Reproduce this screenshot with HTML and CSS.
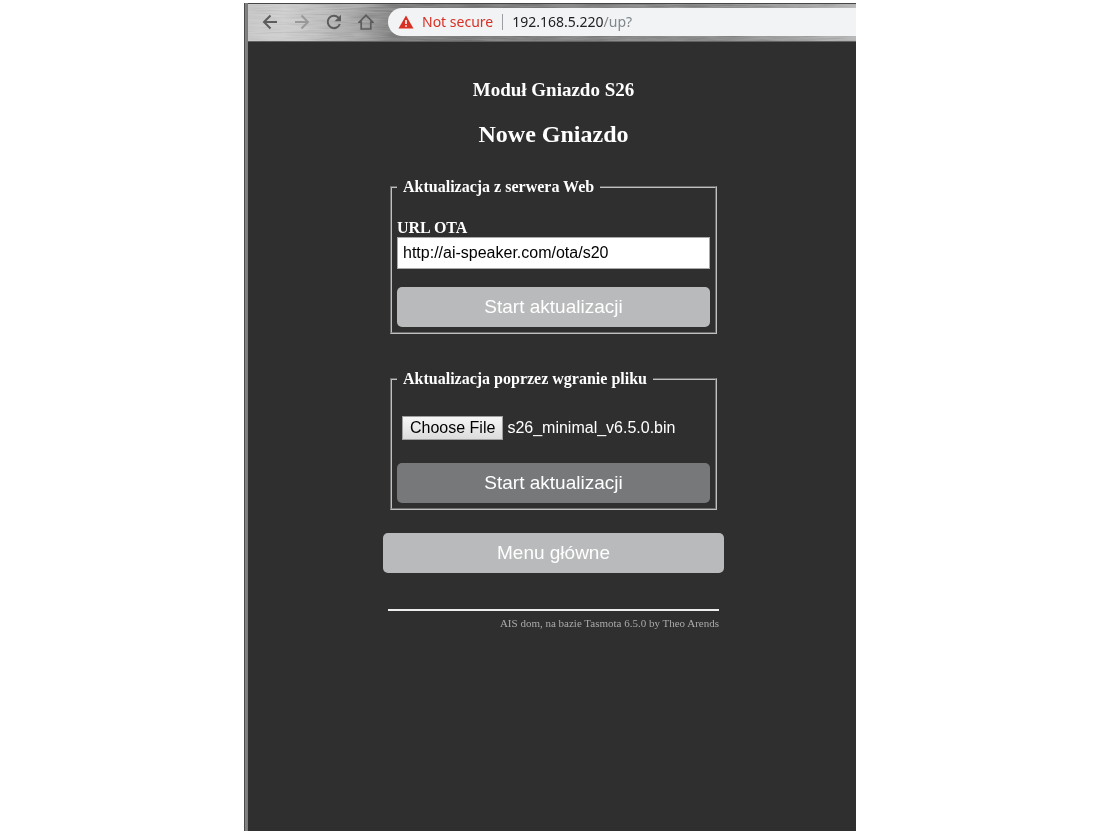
FILE: index.html
```html
<!DOCTYPE html>
<html lang="pl">
<head>
<meta charset="utf-8">
<meta name="viewport" content="width=device-width, initial-scale=1">
<title>Nowe Gniazdo</title>
<link rel="stylesheet" href="styles.css">
</head>
<body>
<div class="window">
  <header class="toolbar">
    <svg class="brushed" aria-hidden="true">
      <filter id="brush" x="0" y="0" width="100%" height="100%" color-interpolation-filters="sRGB">
        <feTurbulence type="fractalNoise" baseFrequency="0.03 0.6" numOctaves="3" seed="4"/>
        <feColorMatrix type="matrix" values="1.4 0 0 0 -0.2  1.4 0 0 0 -0.2  1.4 0 0 0 -0.2  0 0 0 0 1"/>
      </filter>
      <rect width="100%" height="100%" filter="url(#brush)"/>
    </svg>
    <nav class="nav">
      <button class="nav-button" type="button" aria-label="Back">
        <svg viewBox="0 0 16 16"><path d="M15 8H2M8.500 1.500L2 8l6.500 6.500"/></svg>
      </button>
      <button class="nav-button nav-button-off" type="button" aria-label="Forward">
        <svg viewBox="0 0 16 16"><path d="M1 8h13M7.500 1.500L14 8l-6.500 6.500"/></svg>
      </button>
      <button class="nav-button" type="button" aria-label="Reload">
        <svg viewBox="0 0 16 16"><path d="M13.800 10A6.200 6.200 0 1 1 12.400 3.600L14 5.300"/><path class="solid" d="M15 .8v6.400H8.600z"/></svg>
      </button>
      <button class="nav-button" type="button" aria-label="Home">
        <svg viewBox="0 0 16 16"><path class="thin" d="M3.200 8.200H1.200L8 1.200l6.800 7h-2V15H3.200z"/></svg>
      </button>
    </nav>
    <div class="address">
      <svg class="warning" viewBox="0 0 16 14" aria-hidden="true"><path fill="#d93025" d="M8 .5L15.500 13.500H.5z"/><path fill="#fff" d="M7.200 5h1.600v4H7.200zM7.200 10.200h1.600v1.600H7.200z"/></svg>
      <span class="insecure">Not secure</span>
      <span class="url">192.168.5.220<span class="path">/up?</span></span>
    </div>
  </header>
  <main class="page">
    <div class="panel">
      <h3 class="module">Moduł Gniazdo S26</h3>
      <h2 class="name">Nowe Gniazdo</h2>
      <form class="form">
        <fieldset class="group">
          <legend>Aktualizacja z serwera Web</legend>
          <label class="label" for="ota">URL OTA</label>
          <input class="text" id="ota" type="text" value="http://ai-speaker.com/ota/s20">
          <button class="button" type="button">Start aktualizacji</button>
        </fieldset>
      </form>
      <form class="form">
        <fieldset class="group">
          <legend id="upload">Aktualizacja poprzez wgranie pliku</legend>
          <input class="file" id="file" type="file" aria-labelledby="upload">
          <button class="button button-active" type="button">Start aktualizacji</button>
        </fieldset>
      </form>
      <button class="button menu" type="button">Menu główne</button>
      <footer class="footer">AIS dom, na bazie Tasmota 6.5.0 by Theo Arends</footer>
    </div>
  </main>
</div>
<script src="script.js"></script>
</body>
</html>
```
FILE: styles.css
```css
* {
  box-sizing: border-box;
}

body {
  margin: 0;
  padding: 3px 0;
  background: #fff;
}

.window {
  display: flex;
  flex-direction: column;
  max-width: 612px;
  min-height: calc(100vh - 6px);
  margin: 0 auto;
  padding-left: 4px;
  background: linear-gradient(90deg, #4a4a4a 1px, #858585 1px, #787878 4px, #2f2f2f 4px);
}

.toolbar {
  position: relative;
  display: flex;
  align-items: flex-start;
  height: 39px;
  padding-top: 4px;
  border-top: 1px solid #454545;
  border-bottom: 1px solid #626262;
  background: linear-gradient(90deg, #c8c8c8 0, #cecece 6%, #bebebe 12%, #a8a8a8 18%, #848484 24%, #7c7c7c 36%, #888 60%, #909090 80%, #b8b8b8 100%);
}

.brushed {
  position: absolute;
  inset: 0;
  width: 100%;
  height: 100%;
  mix-blend-mode: soft-light;
  opacity: 0.3;
}

.nav {
  position: relative;
  display: flex;
  gap: 16px;
  padding: 6px 14px;
}

.nav-button {
  display: flex;
  width: 16px;
  height: 16px;
  padding: 0;
  border: 0;
  background: none;
  color: #5c5c5c;
}

.nav-button-off {
  color: #999;
}

.nav-button svg {
  width: 16px;
  height: 16px;
  fill: none;
  stroke: currentColor;
  stroke-width: 2;
}

.nav-button .thin {
  stroke-width: 1.7;
}

.nav-button .solid {
  fill: currentColor;
  stroke: none;
}

.address {
  position: relative;
  display: flex;
  flex: 1;
  align-items: center;
  height: 28px;
  padding-left: 10px;
  border-radius: 14px 0 0 14px;
  background: #f1f3f4;
  font: 14px/20px "Noto Sans", sans-serif;
  white-space: nowrap;
}

.warning {
  width: 16px;
  height: 14px;
  margin-right: 8px;
}

.insecure {
  color: #d93025;
}

.url {
  margin-left: 9px;
  padding-left: 9px;
  border-left: 1px solid #9a9da1;
  color: #202124;
  line-height: 16px;
}

.path {
  color: #80868b;
}

.page {
  display: flex;
  flex: 1;
  justify-content: center;
  padding: 37px 0 24px 3px;
  color: #fff;
  font: 16px/18px "Liberation Serif", serif;
}

.panel {
  width: 341px;
}

.module,
.name {
  margin: 0;
  text-align: center;
}

.module {
  font-size: 19px;
  line-height: 22px;
}

.name {
  margin: 19px 0 30px;
  font-size: 24px;
  line-height: 28px;
}

.form {
  padding: 0 7px;
}

.form + .form {
  margin-top: 36px;
}

.group {
  min-width: 0;
  margin: 0;
  padding: 23px 5px 5px;
  border: 2px groove #c0c0c0;
}

.group legend {
  padding: 0 6px;
  font-weight: bold;
}

.label {
  display: block;
  font-weight: bold;
}

.text {
  display: block;
  width: 100%;
  height: 32px;
  margin-bottom: 18px;
  padding: 0 5px;
  border: 1px solid #a9a9a9;
  border-radius: 0;
  background: #fff;
  color: #000;
  font: 16px/18px "Liberation Sans", sans-serif;
}

.file {
  display: block;
  width: 100%;
  margin-bottom: 18px;
  padding: 5px;
  color: #fff;
  font: 16px/24px "Liberation Sans", sans-serif;
}

.file::file-selector-button {
  height: 24px;
  margin: 0 4px 0 0;
  padding: 0 7px;
  border: 1px solid #a0a0a0;
  border-radius: 0;
  background: linear-gradient(#f6f6f6, #dcdcdc);
  color: #000;
  font: inherit;
  line-height: 22px;
}

.button {
  display: block;
  width: 100%;
  height: 40px;
  padding: 0;
  border: 0;
  border-radius: 5px;
  background: #b9babb;
  color: #fff;
  font: 19px/38px "Liberation Sans", sans-serif;
}

.button-active {
  background: #77787a;
}

.menu {
  margin-top: 23px;
}

.footer {
  margin: 36px 5px 0;
  padding-top: 6px;
  border-top: 2px solid #eee;
  color: #aaa;
  font-size: 11px;
  line-height: 13px;
  text-align: right;
}
```
FILE: script.js
```js
const transfer = new DataTransfer();
transfer.items.add(new File([""], "s26_minimal_v6.5.0.bin"));
document.getElementById("file").files = transfer.files;
```
